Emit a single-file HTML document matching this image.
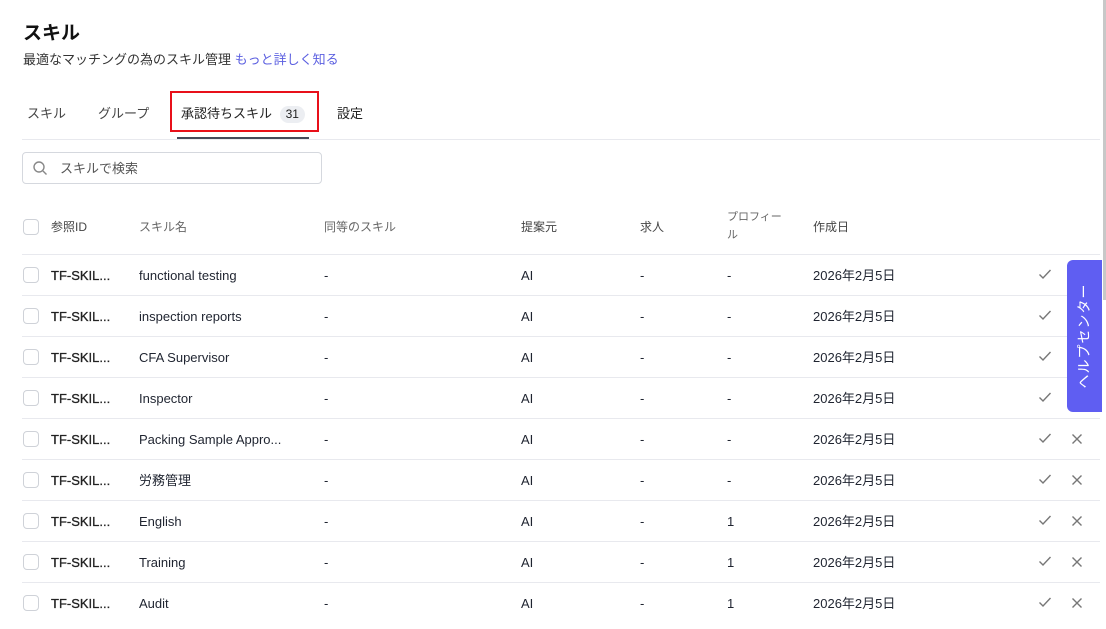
<!DOCTYPE html>
<html><head><meta charset="utf-8"><style>
*{box-sizing:border-box;margin:0;padding:0}
body{width:1106px;height:629px;overflow:hidden;background:#fff;font-family:"Liberation Sans","Noto Sans CJK JP",sans-serif;color:#1f2430;position:relative}
.a{position:absolute;white-space:nowrap;line-height:18px}
h1{position:absolute;left:23px;top:22px;font-size:19px;font-weight:700;color:#111;line-height:24px}
.sub{left:23px;top:51px;font-size:13px;color:#333}
.sub span{color:#5b5fe0}
.tab{top:105px;font-size:13px;color:#444}
.cb{position:absolute;left:23px;width:16px;height:16px;border:1px solid #cfd2d8;border-radius:4px;background:#fff}
.hd{top:218px;font-size:12px;color:#666}
.row{position:absolute;left:22px;width:1078px;height:41px;border-top:1px solid #e8e9ee}
.c{position:absolute;top:12px;font-size:13px;line-height:18px;height:18px;color:#1f2430;white-space:nowrap}
</style></head><body>
<h1>スキル</h1>
<div class="a sub">最適なマッチングの為のスキル管理 <span>もっと詳しく知る</span></div>
<div class="a tab" style="left:27px">スキル</div>
<div class="a tab" style="left:98px">グループ</div>
<div class="a tab" style="left:181px;color:#222">承認待ちスキル <span style="display:inline-block;background:#eceef2;border-radius:9px;padding:0 6px;font-size:12px;margin-left:4px;line-height:17px">31</span></div>
<div class="a tab" style="left:337px;color:#222">設定</div>
<div class="a" style="left:170px;top:91px;width:149px;height:41px;border:2px solid #e8101a"></div>
<div class="a" style="left:22px;top:139px;width:1078px;height:1px;background:#e8e9ee"></div>
<div class="a" style="left:177px;top:137px;width:132px;height:2px;background:#444a5a"></div>
<div class="a" style="left:22px;top:152px;width:300px;height:32px;border:1px solid #d5d8de;border-radius:4px"></div>
<svg class="a" style="left:32px;top:160px" width="16" height="16" viewBox="0 0 16 16" fill="none" stroke="#888" stroke-width="1.4"><circle cx="7" cy="7" r="5"/><path d="M11 11l3.5 3.5"/></svg>
<div class="a" style="left:60px;top:160px;font-size:13px;color:#555">スキルで検索</div>
<div class="cb" style="top:219px"></div>
<div class="a hd" style="left:51px;color:#444">参照ID</div>
<div class="a hd" style="left:139px">スキル名</div>
<div class="a hd" style="left:324px">同等のスキル</div>
<div class="a hd" style="left:521px;color:#444">提案元</div>
<div class="a hd" style="left:640px;color:#444">求人</div>
<div class="a hd" style="left:727px;top:208px;font-size:11px;line-height:18px;width:60px;white-space:normal">プロフィー<br>ル</div>
<div class="a hd" style="left:813px;color:#444">作成日</div>
<div id="rows"></div>
<script>
var d=[["functional testing","-",0],["inspection reports","-",0],["CFA Supervisor","-",0],["Inspector","-",0],["Packing Sample Appro...","-",1],["労務管理","-",1],["English","1",1],["Training","1",1],["Audit","1",1]];
var h="";d.forEach(function(r,i){var t=254+i*41;h+='<div class="row" style="top:'+t+'px"><div class="cb" style="left:1px;top:12px"></div><div class="c" style="left:29px;color:#222;-webkit-text-stroke:0.3px #222">TF-SKIL...</div><div class="c" style="left:117px">'+r[0]+'</div><div class="c" style="left:302px">-</div><div class="c" style="left:499px">AI</div><div class="c" style="left:618px">-</div><div class="c" style="left:705px">'+r[1]+'</div><div class="c" style="left:791px">2026年2月5日</div><svg style="position:absolute;left:1016px;top:13px" width="14" height="12" viewBox="0 0 14 12" fill="none" stroke="#777" stroke-width="1.4"><path d="M1.5 6.5l3.5 3.5 7.5-8"/></svg>'+(r[2]?'<svg style="position:absolute;left:1049px;top:14px" width="12" height="12" viewBox="0 0 12 12" stroke="#777" stroke-width="1.4"><path d="M1.5 1.5l9 9M10.5 1.5l-9 9"/></svg>':'')+'</div>'});
document.getElementById("rows").innerHTML=h;
</script>
<div class="a" style="left:1067px;top:260px;width:35px;height:152px;background:#5f5ef2;border-radius:6px 0 0 6px"></div>
<div class="a" style="left:1024px;top:326px;width:120px;height:20px;transform:rotate(-90deg);color:#fff;font-size:14px;text-align:center;line-height:20px;letter-spacing:1px">ヘルプセンター</div>
<div class="a" style="left:1103px;top:0;width:3px;height:300px;background:#c8c8c8"></div>
</body></html>
